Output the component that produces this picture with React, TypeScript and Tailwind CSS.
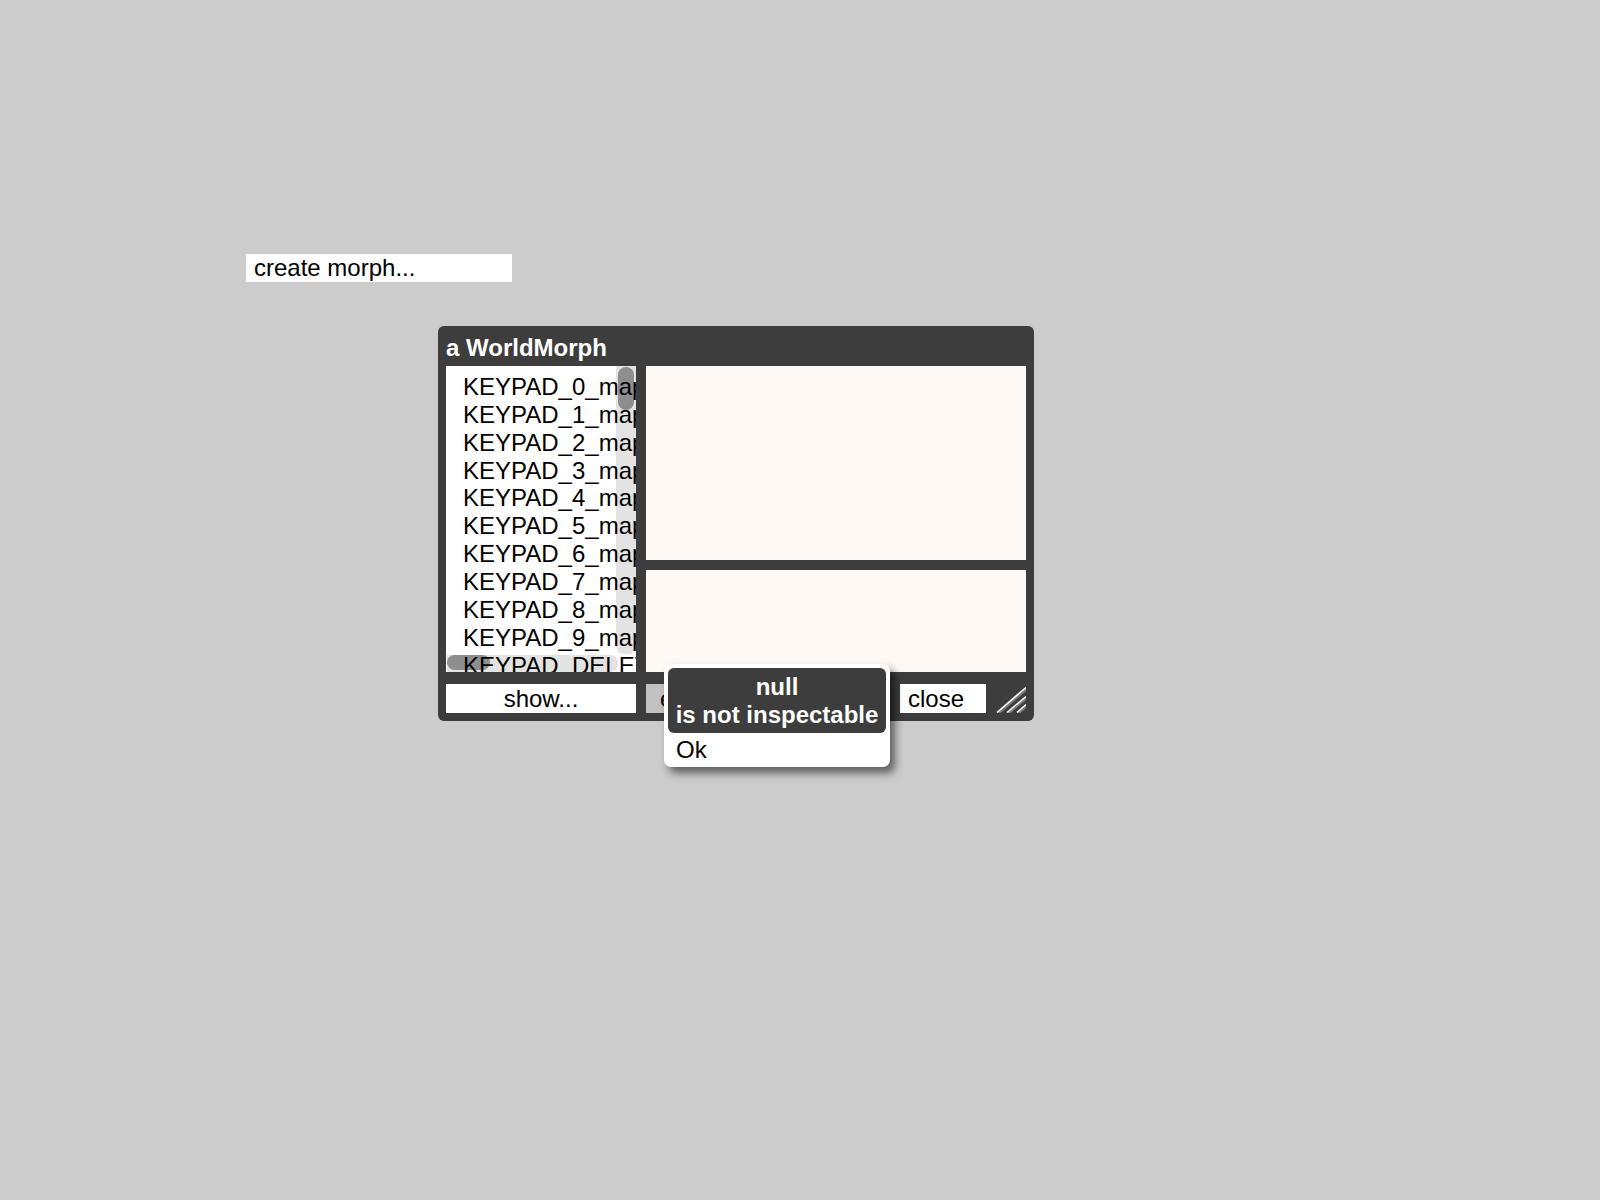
import React from "react";

const items = [
  "KEYPAD_0_map",
  "KEYPAD_1_map",
  "KEYPAD_2_map",
  "KEYPAD_3_map",
  "KEYPAD_4_map",
  "KEYPAD_5_map",
  "KEYPAD_6_map",
  "KEYPAD_7_map",
  "KEYPAD_8_map",
  "KEYPAD_9_map",
  "KEYPAD_DELETE_map",
  "KEYPAD_DIVIDE_map",
];

function ResizeHandle() {
  return (
    <svg width="30" height="29" viewBox="0 0 30 29">
      <g stroke="#7a7a7a" strokeWidth="2">
        <line x1="2" y1="30" x2="31" y2="5" />
        <line x1="12" y1="30" x2="31" y2="14" />
        <line x1="22" y1="30" x2="31" y2="22" />
      </g>
      <g stroke="#ffffff" strokeWidth="1.6">
        <line x1="1" y1="28.5" x2="30" y2="3.5" />
        <line x1="11" y1="28.5" x2="30" y2="12.5" />
        <line x1="21" y1="28.5" x2="30" y2="20.5" />
      </g>
    </svg>
  );
}

export default function App() {
  return (
    <div
      className="relative w-[1600px] h-[1200px] bg-[#cccccc] overflow-hidden text-black"
      style={{ fontFamily: '"Liberation Sans", Arial, sans-serif' }}
    >
      {/* create morph menu item */}
      <div className="absolute left-[246px] top-[254px] w-[266px] h-[28px] bg-white pl-[8px] text-[24px] leading-[28px]">
        create morph...
      </div>

      {/* Inspector window */}
      <div className="absolute left-[438px] top-[326px] w-[596px] h-[395px] bg-[#3d3d3d] rounded-[6px] flex flex-col px-[8px] pb-[8px]">
        <div className="h-[40px] pt-[3px] text-white font-bold text-[24px] leading-[38px] whitespace-nowrap">
          a WorldMorph
        </div>
        <div className="flex gap-[10px] h-[306px]">
          {/* list */}
          <div className="relative w-[190px] h-full bg-white overflow-hidden">
            {/* vertical scroll track (behind text) */}
            <div className="absolute right-0 top-0 w-[20px] h-[288px] bg-[#e3e3e3] rounded-b-[8px]" />
            <div className="absolute right-[2px] top-[1px] w-[16px] h-[43px] bg-[#8e8e8e] rounded-full" />
            {/* horizontal scroll track (behind text) */}
            <div className="absolute left-[1px] bottom-0 w-[171px] h-[17px] bg-[#e3e3e3] rounded-r-[8px]" />
            <div className="absolute left-[1px] bottom-[2px] w-[43px] h-[15px] bg-[#8e8e8e] rounded-full" />
            <div className="relative pt-[7px] pl-[17px] text-[24px] leading-[27.86px] whitespace-nowrap">
              {items.map((t) => (
                <div key={t}>{t}</div>
              ))}
            </div>
          </div>
          {/* right panes */}
          <div className="flex-1 flex flex-col gap-[10px]">
            <div className="h-[194px] bg-[#fff9f5]" />
            <div className="flex-1 bg-[#fff9f5]" />
          </div>
        </div>
        {/* buttons */}
        <div className="mt-[12px] h-[29px] flex gap-[10px]">
          <div className="w-[190px] bg-white text-center text-[24px] leading-[29px]">show...</div>
          <div className="relative w-[244px] bg-[#c2c2c2] overflow-hidden">
            <span className="absolute left-[14px] top-0 text-[24px] leading-[29px]">edit...</span>
          </div>
          <div className="w-[86px] bg-white pl-[8px] text-[24px] leading-[29px]">close</div>
          <div className="w-[30px]">
            <ResizeHandle />
          </div>
        </div>
      </div>

      {/* dialog */}
      <div className="absolute left-[664px] top-[664px] w-[226px] h-[103px] bg-white rounded-[7px] p-[4px] shadow-[5px_6px_8px_rgba(0,0,0,0.55)]">
        <div className="h-[65px] pt-[5px] bg-[#3d3d3d] rounded-[6px] text-white font-bold text-center text-[24px] leading-[28px] whitespace-nowrap">
          <div>null</div>
          <div>is not inspectable</div>
        </div>
        <div className="pt-[3px] pl-[8px] text-[24px] leading-[28px]">Ok</div>
      </div>
    </div>
  );
}
